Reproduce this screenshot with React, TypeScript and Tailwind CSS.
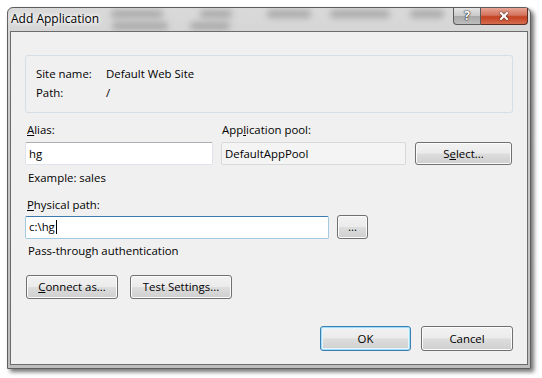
import { X } from 'lucide-react';

const font = { fontFamily: '"Open Sans", "Noto Sans", sans-serif' };

function Btn({ label, className = '', primary = false }: { label: React.ReactNode; className?: string; primary?: boolean }) {
  return (
    <button
      className={
        'flex items-center justify-center rounded-[3px] border text-[11.4px] text-black ' +
        'bg-[linear-gradient(to_bottom,#f2f2f2_0%,#ebebeb_48%,#dddddd_52%,#cfcfcf_100%)] ' +
        (primary
          ? 'border-[#3c7fb1] shadow-[inset_0_0_0_1px_#9fdcf8,inset_0_0_0_2px_#e6f6fd] '
          : 'border-[#707070] shadow-[inset_0_0_0_1px_#fbfbfb] ') +
        className
      }
    >
      {label}
    </button>
  );
}

function TitleButtons() {
  return (
    <div className="flex self-start mr-[2px]">
      <div className="w-[28px] h-[17px] flex items-center justify-center rounded-bl-[4px] border border-t-0 border-[#5b5b5b] bg-[linear-gradient(to_bottom,#e4e4e4_0%,#c9c9c9_50%,#a9a9a9_52%,#bdbdbd_100%)]">
        <span className="text-[12px] font-bold leading-none text-white [text-shadow:0_0_1px_#333,0_0_1px_#333,0_0_2px_#333]">?</span>
      </div>
      <div className="w-[47px] h-[17px] flex items-center justify-center rounded-br-[4px] border border-t-0 border-l-0 border-[#5b2d24] bg-[linear-gradient(to_bottom,#e8a493_0%,#d4735e_45%,#c2401f_55%,#d66c4e_100%)]">
        <X className="w-[12px] h-[12px] text-white drop-shadow-[0_0_1px_#333]" strokeWidth={4} />
      </div>
    </div>
  );
}

// blurred shapes of the window behind the glass
const blobs = [
  'left-[103px] top-[2px] w-[52px]',
  'left-[192px] top-[2px] w-[32px]',
  'left-[259px] top-[2px] w-[44px]',
  'left-[322px] top-[2px] w-[60px]',
  'left-[402px] top-[2px] w-[34px]',
  'left-[104px] top-[14px] w-[56px]',
  'left-[182px] top-[14px] w-[40px]',
];

export default function App() {
  return (
    <div className="w-[542px] h-[378px] bg-white pt-[7px] pl-[7px]" style={font}>
      <div className="w-[524px] h-[362px] flex flex-col rounded-t-[6px] border border-[#5e5e5e] bg-[linear-gradient(to_bottom,#d9d9d9_0%,#cacaca_30%,#bdbdbd_100%)] shadow-[3px_3px_4px_rgba(0,0,0,0.55)]">
        {/* title bar */}
        <div className="relative h-[23px] flex items-start justify-between">
          <div className="absolute inset-0 overflow-hidden pointer-events-none">
            {blobs.map((b) => (
              <div key={b} className={'absolute h-[8px] rounded-full bg-[#8c8c8c] blur-[3px] opacity-60 ' + b} />
            ))}
          </div>
          <span className="relative pl-[3px] pt-[2px] text-[12px] text-black [text-shadow:0_0_6px_#fff,0_0_6px_#fff,0_0_3px_#fff]">Add Application</span>
          <div className="relative">
            <TitleButtons />
          </div>
        </div>

        {/* client */}
        <div className="mx-[2px] h-[334px] border border-[#6c6c6c] bg-[#f0f0f0] pl-[14px] pt-[23px] text-[11.4px] text-black">
          {/* site box */}
          <div className="w-[488px] h-[58px] rounded-[3px] border border-[#d5dfe5] pl-[10px] pt-[8px]">
            <div className="flex h-[19px] items-center">
              <span className="w-[70px]">Site name:</span>
              <span>Default Web Site</span>
            </div>
            <div className="flex h-[19px] items-center">
              <span className="w-[70px]">Path:</span>
              <span>/</span>
            </div>
          </div>

          {/* alias + pool */}
          <div className="mt-[9px] flex h-[16px] items-center">
            <span className="w-[196px] pl-[2px]"><u>A</u>lias:</span>
            <span className="pl-[1px]">App<u>l</u>ication pool:</span>
          </div>
          <div className="mt-[4px] flex items-center">
            <div className="w-[188px] h-[23px] flex items-center rounded-[2px] border border-[#e2e3ea] border-t-[#abadb3] bg-white pl-[3px]">hg</div>
            <div className="ml-[8px] w-[185px] h-[23px] flex items-center rounded-[2px] border border-[#d9d9d9] bg-[#f4f4f4] pl-[3px]">DefaultAppPool</div>
            <Btn label={<span>S<u>e</u>lect...</span>} className="ml-[9px] w-[97px] h-[23px]" />
          </div>
          <div className="mt-[5px] h-[16px] flex items-center pl-[3px]">Example: sales</div>

          {/* physical path */}
          <div className="mt-[11px] h-[16px] flex items-center pl-[2px]"><u>P</u>hysical path:</div>
          <div className="mt-[2px] flex items-center">
            <div className="w-[304px] h-[23px] flex items-center rounded-[2px] border border-[#a4c9e3] border-t-[#3d7bad] bg-white pl-[3px]">
              c:\hg<span className="ml-[1px] inline-block w-[1px] h-[14px] bg-black" />
            </div>
            <Btn label="..." className="ml-[8px] w-[31px] h-[24px]" />
          </div>
          <div className="mt-[4px] h-[16px] flex items-center pl-[3px]">Pass-through authentication</div>

          {/* connect / test */}
          <div className="mt-[16px] flex pl-[1px]">
            <Btn label={<span><u>C</u>onnect as...</span>} className="w-[92px] h-[24px]" />
            <Btn label={<span>Test Settin<u>g</u>s...</span>} className="ml-[12px] w-[102px] h-[24px]" />
          </div>

          {/* ok / cancel */}
          <div className="mt-[27px] flex pl-[295px]">
            <Btn label="OK" primary className="w-[91px] h-[25px]" />
            <Btn label="Cancel" className="ml-[10px] w-[92px] h-[25px]" />
          </div>
        </div>
      </div>
    </div>
  );
}
